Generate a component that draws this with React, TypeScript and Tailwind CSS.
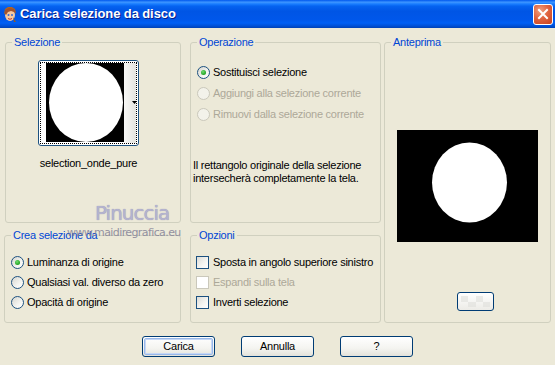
import React from "react";

const font = "font-['Liberation_Sans',Arial,sans-serif]";

function Radio({ label, checked = false, disabled = false }: { label: string; checked?: boolean; disabled?: boolean }) {
  return (
    <div className="flex h-[13px] items-center">
      <span
        className={`flex h-[13px] w-[13px] items-center justify-center rounded-full border ${
          disabled
            ? "border-[#cac8bb] bg-[#f3f2ea]"
            : "border-[#1c5180] bg-[linear-gradient(135deg,#d6d6cf_0%,#f4f4f0_60%,#ffffff_100%)]"
        }`}
      >
        {checked && <span className="h-[5px] w-[5px] rounded-full bg-[radial-gradient(circle_at_40%_35%,#6fdd6f,#21a121_70%)]" />}
      </span>
      <span className={`ml-[3px] whitespace-nowrap ${disabled ? "text-[#aca899]" : "text-black"}`}>{label}</span>
    </div>
  );
}

function Check({ label, disabled = false }: { label: string; disabled?: boolean }) {
  return (
    <div className="flex h-[13px] items-center">
      <span
        className={`h-[13px] w-[13px] border ${
          disabled ? "border-[#cac8bb] bg-white" : "border-[#1c5180] bg-[linear-gradient(135deg,#dcdcd7_0%,#f6f6f3_60%,#ffffff_100%)]"
        }`}
      />
      <span className={`ml-[4px] whitespace-nowrap ${disabled ? "text-[#aca899]" : "text-black"}`}>{label}</span>
    </div>
  );
}

function Group({ title, className, children }: { title: string; className: string; children?: React.ReactNode }) {
  return (
    <fieldset className={`min-w-0 rounded-[3px] border border-[#d0d0bf] ${className}`}>
      <legend className="ml-[6px] px-[2px] leading-[13px] text-[#0046d5]">{title}</legend>
      {children}
    </fieldset>
  );
}

function XpButton({ label, isDefault = false }: { label: string; isDefault?: boolean }) {
  return (
    <div className="h-[21px] w-[73px] rounded-[3px] border border-[#003c74] bg-[linear-gradient(180deg,#ffffff_0%,#f4f4f0_60%,#e3e2da_100%)] p-[1px]">
      <div
        className={`flex h-full w-full items-center justify-center rounded-[2px] ${
          isDefault ? "border border-[#98b8ea] shadow-[inset_0_0_0_1px_#c6d7f5]" : ""
        }`}
      >
        {label}
      </div>
    </div>
  );
}

function TitleIcon() {
  return (
    <svg width="16" height="17" viewBox="0 0 16 17" className="ml-[2px]">
      <path d="M3 3 L6 1 L10 1 L13 3 L14 7 L12 6 L10 4 L7 5 L4 7 L2 8 Z" fill="#b5651d" />
      <ellipse cx="8" cy="9" rx="5" ry="6" fill="#f6c9a0" />
      <path d="M3 4 L7 2 L12 3 L14 8 L12 6 L9 5 L6 6 L4 9 L3 8 Z" fill="#a0522d" />
      <circle cx="6.5" cy="9" r="1" fill="#3a6ad0" />
      <circle cx="10" cy="9" r="1" fill="#3a6ad0" />
      <path d="M6 12.5 Q8 14 10 12.5" stroke="#c0392b" strokeWidth="1" fill="none" />
      <path d="M11 11 L14 16 L12 16 Z" fill="#8b5a2b" />
    </svg>
  );
}

export default function App() {
  return (
    <div className={`relative h-[365px] w-[555px] overflow-hidden bg-[#ece9d8] text-[11px] tracking-[-0.25px] ${font}`}>
      {/* title bar */}
      <div className="flex h-[28px] items-center bg-[linear-gradient(180deg,#0058ee_0%,#3d95ff_8%,#1a7eff_14%,#0563f0_22%,#0055e5_40%,#0057ea_70%,#0060f5_82%,#0051d8_92%,#0042b6_100%)]">
        <TitleIcon />
        <span className="ml-[2px] text-[13px] font-bold tracking-[-0.1px] text-white [text-shadow:1px_1px_0_#0a1e8c]">
          Carica selezione da disco
        </span>
        <div className="ml-auto mr-[2px] flex h-[21px] w-[20px] items-center justify-center rounded-[3px] border border-white bg-[radial-gradient(circle_at_35%_30%,#f0a080_0%,#e06440_45%,#c8401c_100%)]">
          <svg width="12" height="12" viewBox="0 0 12 12">
            <path d="M2 2 L10 10 M10 2 L2 10" stroke="white" strokeWidth="2" strokeLinecap="square" />
          </svg>
        </div>
      </div>

      {/* groups */}
      <div className="flex pl-[4px] pt-[8px]">
        <div className="flex w-[177px] flex-col gap-[6px]">
          <Group title="Selezione" className="ml-[1px] h-[187px] w-[176px]">
            <div className="ml-[32px] mt-[11px] flex w-[101px] flex-col items-center">
              <div className="h-[86px] w-[101px] rounded-[3px] border border-[#1c5180] bg-white p-[1px]">
                <div className="flex h-full w-full border border-dotted border-black">
                  <svg width="78" height="79" viewBox="0 0 78 79" className="ml-[5px]">
                    <rect width="78" height="79" fill="black" />
                    <ellipse cx="40" cy="39.5" rx="37" ry="39.5" fill="white" />
                  </svg>
                  <div className="relative flex-1 bg-[linear-gradient(90deg,#f8f8f6,#e4e4e0)]">
                    <svg width="5" height="3" viewBox="0 0 5 3" className="absolute left-[8px] top-[38px]">
                      <path d="M0 0 L5 0 L2.5 3 Z" fill="black" />
                    </svg>
                  </div>
                </div>
              </div>
              <div className="mt-[11px] whitespace-nowrap leading-[13px]">selection_onde_pure</div>
            </div>
          </Group>
          <Group title="Crea selezione da" className="h-[94px] w-[177px]">
            <div className="mt-[14px] flex flex-col gap-[7px] pl-[6px]">
              <Radio label="Luminanza di origine" checked />
              <Radio label="Qualsiasi val. diverso da zero" />
              <Radio label="Opacità di origine" />
            </div>
          </Group>
        </div>

        <div className="ml-[9px] flex w-[191px] flex-col gap-[6px]">
          <Group title="Operazione" className="h-[187px] w-[191px]">
            <div className="mt-[17px] flex flex-col gap-[8px] pl-[6px]">
              <Radio label="Sostituisci selezione" checked />
              <Radio label="Aggiungi alla selezione corrente" disabled />
              <Radio label="Rimuovi dalla selezione corrente" disabled />
            </div>
            <div className="mt-[38px] whitespace-nowrap pl-[2px] leading-[13px]">
              Il rettangolo originale della selezione
              <br />
              intersecherà completamente la tela.
            </div>
          </Group>
          <Group title="Opzioni" className="h-[94px] w-[191px]">
            <div className="mt-[14px] flex flex-col gap-[7px] pl-[5px]">
              <Check label="Sposta in angolo superiore sinistro" />
              <Check label="Espandi sulla tela" disabled />
              <Check label="Inverti selezione" />
            </div>
          </Group>
        </div>

        <Group title="Anteprima" className="ml-[3px] h-[287px] w-[167px]">
          <div className="ml-[12px] mt-[81px] h-[112px] w-[141px]">
            <svg width="141" height="112" viewBox="0 0 141 112">
              <rect width="141" height="112" fill="black" />
              <ellipse cx="72.5" cy="52.5" rx="37.5" ry="40" fill="white" />
            </svg>
          </div>
          <div className="ml-[72px] mt-[50px] h-[19px] w-[37px] rounded-[3px] border border-[#003c74] bg-[linear-gradient(180deg,#ffffff,#ecebe6)] p-[3px]">
            <div className="grid h-full w-full grid-cols-4 grid-rows-2 opacity-60">
              <span className="bg-[#e0e0dc]" />
              <span />
              <span className="bg-[#e0e0dc]" />
              <span />
              <span />
              <span className="bg-[#e0e0dc]" />
              <span />
              <span className="bg-[#e0e0dc]" />
            </div>
          </div>
        </Group>
      </div>

      {/* buttons */}
      <div className="ml-[142px] mt-[13px] flex gap-[26px]">
        <XpButton label="Carica" isDefault />
        <XpButton label="Annulla" />
        <XpButton label="?" />
      </div>

      {/* watermark */}
      <div className="pointer-events-none absolute left-[95px] top-[202px] font-['DejaVu_Sans',sans-serif] text-[20px] leading-[22px] tracking-[-1px] text-[#b4b3cf] [text-shadow:0_0_1px_#8e8db0]">
        Pinuccia
      </div>
      <div className="pointer-events-none absolute left-[67px] top-[226px] font-['DejaVu_Sans',sans-serif] text-[11px] leading-[13px] tracking-[-0.6px] text-[#7c7b93] opacity-80">
        www.maidiregrafica.eu
      </div>
    </div>
  );
}
